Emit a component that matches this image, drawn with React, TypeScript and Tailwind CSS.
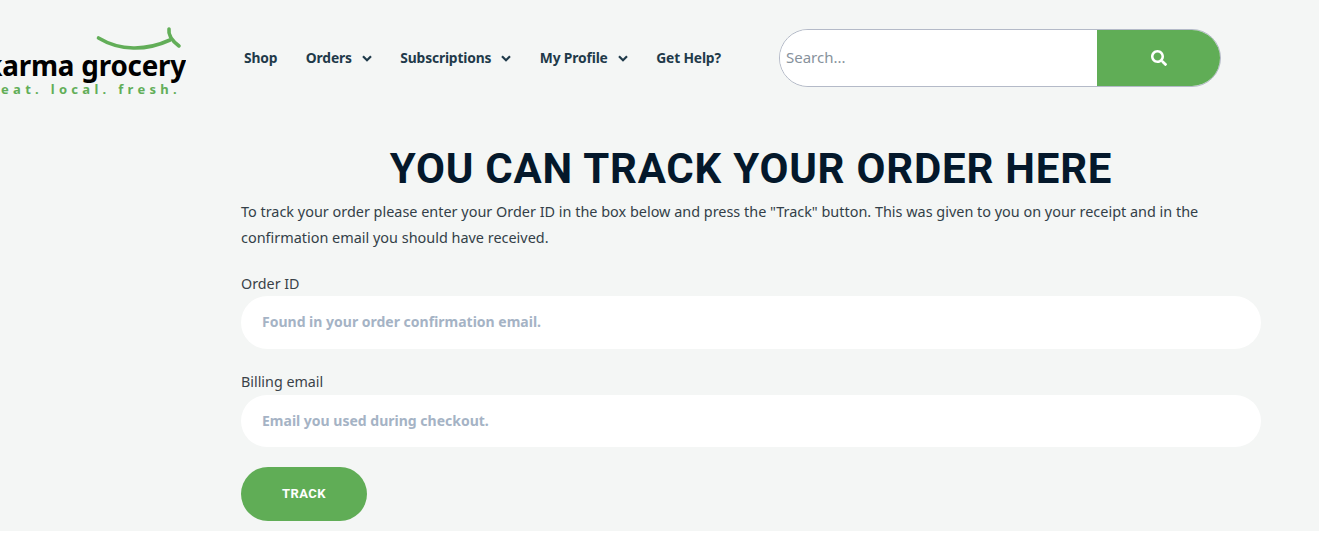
import { FaSearch } from 'react-icons/fa';

const navItems = [
  { label: 'Shop', hasMenu: false },
  { label: 'Orders', hasMenu: true },
  { label: 'Subscriptions', hasMenu: true },
  { label: 'My Profile', hasMenu: true },
  { label: 'Get Help?', hasMenu: false },
];

function Chevron() {
  return (
    <svg width="10" height="7" viewBox="0 0 10 7" fill="none" stroke="#1f3a4a" strokeWidth="2.2">
      <path d="M1 1.2 L5 5.2 L9 1.2" />
    </svg>
  );
}

// Logo is cut by the left edge of the page, same as the original
function Logo() {
  return (
    <div className="w-[186px] shrink-0 flex flex-col items-end overflow-hidden -mt-[3px]">
      <svg width="90" height="26" viewBox="0 0 90 26" fill="none">
        <path d="M2.5 12 C 24 25, 50 25, 74 14" stroke="#62ae58" strokeWidth="3.6" strokeLinecap="round" />
        <path d="M73 3 C 72 9, 75 14, 83 20" stroke="#62ae58" strokeWidth="3.6" strokeLinecap="round" />
      </svg>
      <div className="whitespace-nowrap text-[27.8px] leading-[30px] -mt-[2px] font-bold tracking-[-0.2px] text-black">karma grocery</div>
      <div className="whitespace-nowrap text-[13px] leading-[16px] mt-px font-bold tracking-[4.3px] text-[#62ae58] mr-[5px]">eat. local. fresh.</div>
    </div>
  );
}

export default function App() {
  return (
    <div className="h-[556px] bg-white font-['Noto_Sans',sans-serif]">
      <div className="h-[531px] bg-[#f4f6f5]">
        <header className="h-[115px] flex items-start pt-[29px]">
          <Logo />
          <nav className="flex items-center gap-[28.5px] ml-[58px] h-[58px] w-[479px]">
            {navItems.map((item) => (
              <a key={item.label} className="flex items-center gap-[10px] text-[13.8px] font-bold tracking-[-0.15px] text-[#1f3a4a]">
                {item.label}
                {item.hasMenu && <Chevron />}
              </a>
            ))}
          </nav>
          <div className="ml-14 w-[442px] h-[58px] flex rounded-full border border-[#b4bac8] overflow-hidden">
            <input
              placeholder="Search..."
              className="flex-1 min-w-0 bg-white pl-[6px] pb-[2px] text-[15px] outline-none placeholder:text-[#87929c]"
            />
            <button className="w-[123px] bg-[#60ad56] flex items-center justify-center">
              <FaSearch size={16} color="white" />
            </button>
          </div>
        </header>

        <main className="ml-[241px] w-[1020px]">
          <h1 className="text-center text-[42px] leading-[50px] font-bold font-['Roboto',sans-serif] tracking-[0.78px] text-[#04182b] mt-[29px]">
            YOU CAN TRACK YOUR ORDER HERE
          </h1>
          <p className="text-[14.43px] leading-[26px] text-[#333f48] mt-[5px]">
            To track your order please enter your Order ID in the box below and press the "Track" button. This was given to you on your receipt and in the confirmation email you should have received.
          </p>

          <label className="block text-[14.3px] leading-5 text-[#3a4248] mt-[23px]">Order ID</label>
          <input
            placeholder="Found in your order confirmation email."
            className="block w-full h-[53px] mt-[2px] rounded-full bg-white px-[21px] pb-[2px] text-sm font-bold outline-none placeholder:text-[#a5b3c5]"
          />

          <label className="block text-[14.3px] leading-5 text-[#3a4248] mt-[23px]">Billing email</label>
          <input
            placeholder="Email you used during checkout."
            className="block w-full h-[52px] mt-[3px] rounded-full bg-white px-[21px] pb-[2px] text-sm font-bold outline-none placeholder:text-[#a5b3c5]"
          />

          <button className="block w-[126px] h-[54px] mt-5 rounded-full bg-[#60ad56] text-white text-[13px] font-bold font-['Roboto',sans-serif] tracking-[0.4px]">
            TRACK
          </button>
        </main>
      </div>
    </div>
  );
}
